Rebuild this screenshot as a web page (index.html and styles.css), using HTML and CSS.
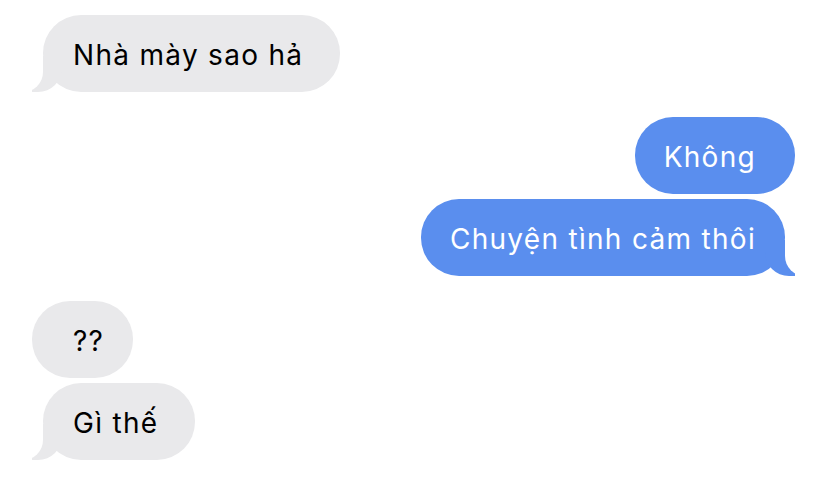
FILE: index.html
```html
<!DOCTYPE html>
<html lang="vi">
<head>
    <meta charset="UTF-8">
    <meta name="viewport" content="width=device-width, initial-scale=1.0">
    <title>Tin nhắn</title>
    <link rel="stylesheet" href="styles.css">
</head>
<body>
    <div class="thread">
        <div class="group incoming">
            <div class="bubble tail">Nhà mày sao hả</div>
        </div>

        <div class="group outgoing">
            <div class="bubble">Không</div>
            <div class="bubble tail">Chuyện tình cảm thôi</div>
        </div>

        <div class="group incoming">
            <div class="bubble">??</div>
            <div class="bubble tail">Gì thế</div>
        </div>
    </div>
</body>
</html>
```

FILE: styles.css
```css
body, html {
    margin: 0;
    padding: 0;
    background-color: #fff;
    font-family: "Inter", "Noto Sans", sans-serif;
}

.thread {
    display: flex;
    flex-direction: column;
    gap: 25px;
    padding: 15px 33px 0 32px;
}

.group {
    display: flex;
    flex-direction: column;
    gap: 5px;
}

.incoming {
    align-items: flex-start;
}

.outgoing {
    align-items: flex-end;
}

.bubble {
    position: relative;
    height: 77px;
    box-sizing: border-box;
    display: flex;
    align-items: center;
    padding-top: 2px;
    border-radius: 38px;
    font-size: 28px;
    letter-spacing: 1.3px;
    white-space: nowrap;
}

.incoming .bubble {
    background-color: #e9e9eb;
    color: #000;
    padding-left: 41px;
    padding-right: 29px;
}

.outgoing .bubble {
    background-color: #5a8eee;
    color: #fff;
    padding-left: 29px;
    padding-right: 39px;
}

/* tail bubbles: body is shifted in, the tail fills the gap */
.incoming .bubble.tail {
    margin-left: 11px;
    padding-left: 30px;
    padding-right: 37px;
}

.outgoing .bubble.tail {
    margin-right: 10px;
    padding-right: 29px;
}

.bubble.tail::before,
.bubble.tail::after {
    content: "";
    position: absolute;
    bottom: 0;
}

.incoming .bubble.tail::before {
    left: -11px;
    width: 30px;
    height: 36px;
    background-color: #e9e9eb;
    border-bottom-right-radius: 24px;
}

.incoming .bubble.tail::after {
    left: -30px;
    width: 30px;
    height: 40px;
    background-color: #fff;
    border-bottom-right-radius: 20px;
}

.outgoing .bubble.tail::before {
    right: -10px;
    width: 30px;
    height: 36px;
    background-color: #5a8eee;
    border-bottom-left-radius: 24px;
}

.outgoing .bubble.tail::after {
    right: -30px;
    width: 30px;
    height: 40px;
    background-color: #fff;
    border-bottom-left-radius: 20px;
}
```
